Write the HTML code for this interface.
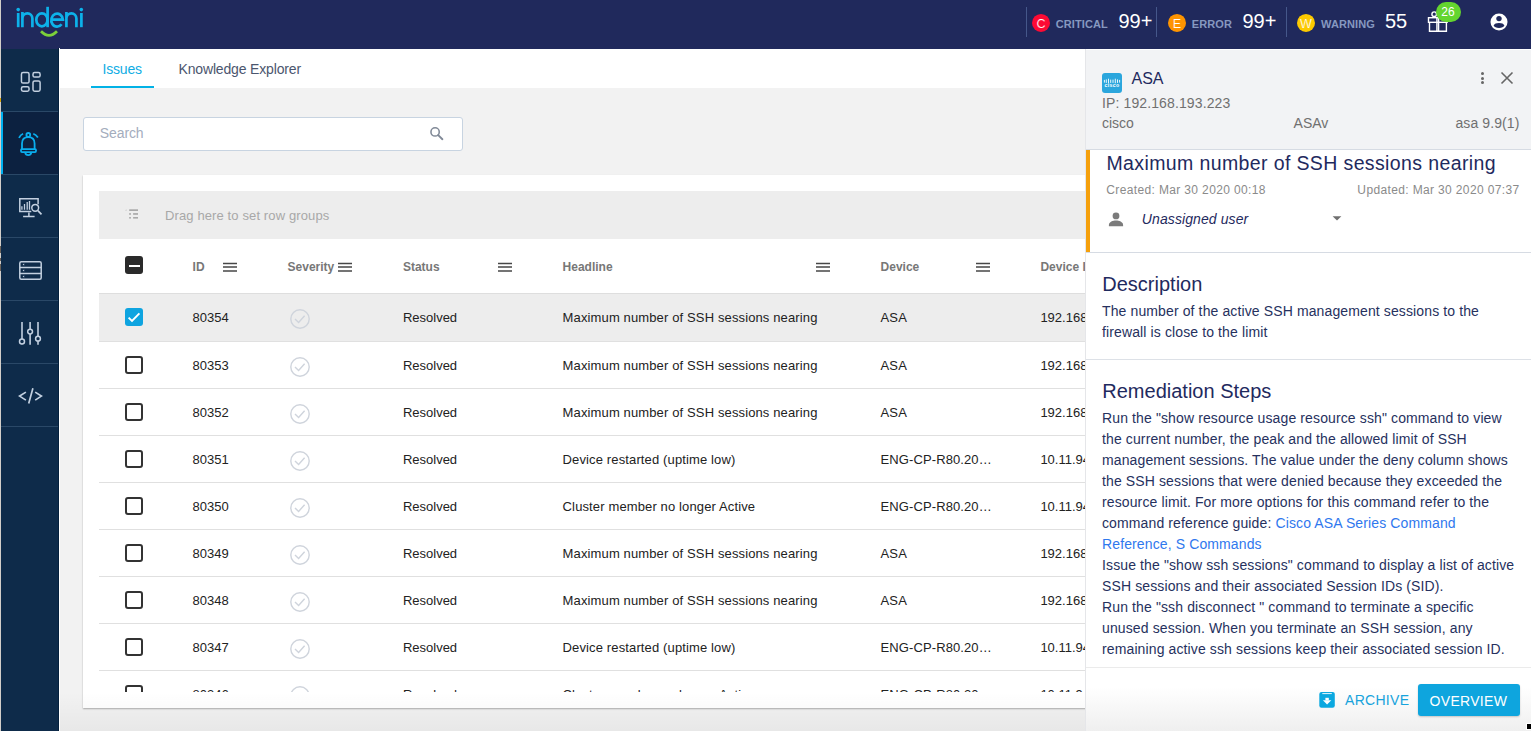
<!DOCTYPE html><html><head><meta charset="utf-8"><style>
*{box-sizing:border-box;margin:0;padding:0}
html,body{width:1531px;height:731px;overflow:hidden;background:#f2f2f2;font-family:"Liberation Sans",sans-serif}
body{position:relative}
.a{position:absolute}
.t{position:absolute;white-space:nowrap;line-height:1}
.hd{position:absolute;top:7px;width:1px;height:30px;background:#45578a}
.sev{position:absolute;width:18px;height:18px;border-radius:50%;color:#fff;font-size:12px;text-align:center;line-height:18px}
.slab{font-size:11px;font-weight:bold;color:#8191b5}
.cnt{font-size:20px;color:#fff}
.hl{font-size:12px;font-weight:bold;color:#777}
.menu{position:absolute;width:14px;height:10px;border-top:2px solid #454545;border-bottom:2px solid #454545}
.menu:after{content:"";position:absolute;left:0;top:2px;width:14px;height:2px;background:#454545}
.cb{position:absolute;left:125px;width:18px;height:18px;border:2px solid #333;border-radius:3px}
.ct{font-size:13px;color:#222;letter-spacing:.1px}
.nv{color:#1f2a5e}
</style></head><body>
<div class="a" style="left:59px;top:48px;width:1472px;height:40px;background:#fff"></div>
<div class="t" style="left:102.5px;top:62.35px;font-size:14px;color:#10ade4;letter-spacing:-.2px">Issues</div>
<div class="a" style="left:91px;top:86px;width:63px;height:2px;background:#02b2e6"></div>
<div class="t" style="left:178.5px;top:62.45px;font-size:14px;color:#4b566e;letter-spacing:-.16px">Knowledge Explorer</div>
<div class="a" style="left:83px;top:117px;width:380px;height:34px;background:#fff;border:1px solid #c8d4e1;border-radius:3px"></div>
<div class="t" style="left:99.8px;top:125.75px;font-size:14px;color:#a4adbd;letter-spacing:-.1px">Search</div>
<svg class="a" style="left:420px;top:120px" width="35" height="28" viewBox="420 120 35 28"><circle cx="435.1" cy="131.9" r="4.15" fill="none" stroke="#808997" stroke-width="1.55"/><path d="M438.2 135.1L442.4 139.2" stroke="#808997" stroke-width="1.9" stroke-linecap="round"/></svg>
<div class="a" style="left:83px;top:175px;width:1100px;height:533px;background:#fff;box-shadow:0 1px 1.5px rgba(0,0,0,.3)"></div>
<div class="a" style="left:99px;top:191px;width:1000px;height:48px;background:#ededed"></div>
<svg class="a" style="left:120px;top:205px" width="22" height="18" viewBox="120 205 22 18"><g fill="#a9a9a9"><path d="M125.3 210.2L126.4 209.6V210.8Z"/><rect x="129.2" y="209.3" width="8.8" height="1.7"/><rect x="129.2" y="213.1" width="1.7" height="1.7"/><rect x="133.1" y="213.1" width="4.9" height="1.7"/><rect x="129.2" y="217" width="1.7" height="1.6"/><rect x="133.1" y="217" width="4.9" height="1.6"/></g></svg>
<div class="t" style="left:165px;top:209.20px;font-size:13px;color:#a8a8a8;letter-spacing:.12px">Drag here to set row groups</div>
<div class="a" style="left:99px;top:293px;width:1000px;height:1px;background:#dedede"></div>
<div class="a" style="left:125px;top:256px;width:18px;height:18px;background:#2a2a2a;border-radius:3px"></div>
<div class="a" style="left:129px;top:264.5px;width:11px;height:2.5px;background:#fff"></div>
<div class="t" style="left:192.6px;top:260.84px;font-size:12px;color:#777;font-weight:bold">ID</div>
<div class="t" style="left:287.6px;top:260.84px;font-size:12px;color:#777;font-weight:bold">Severity</div>
<div class="t" style="left:402.9px;top:260.84px;font-size:12px;color:#777;font-weight:bold">Status</div>
<div class="t" style="left:562.6px;top:260.84px;font-size:12px;color:#777;font-weight:bold">Headline</div>
<div class="t" style="left:880.6px;top:260.84px;font-size:12px;color:#777;font-weight:bold">Device</div>
<div class="t" style="left:1040.4px;top:260.84px;font-size:12px;color:#777;font-weight:bold">Device IP</div>
<svg class="a" style="left:223px;top:261px" width="14" height="12" viewBox="0 0 14 12"><path d="M0 2.4H14M0 6.1H14M0 9.9H14" stroke="#474747" stroke-width="1.5"/></svg>
<svg class="a" style="left:338px;top:261px" width="14" height="12" viewBox="0 0 14 12"><path d="M0 2.4H14M0 6.1H14M0 9.9H14" stroke="#474747" stroke-width="1.5"/></svg>
<svg class="a" style="left:498px;top:261px" width="14" height="12" viewBox="0 0 14 12"><path d="M0 2.4H14M0 6.1H14M0 9.9H14" stroke="#474747" stroke-width="1.5"/></svg>
<svg class="a" style="left:816px;top:261px" width="14" height="12" viewBox="0 0 14 12"><path d="M0 2.4H14M0 6.1H14M0 9.9H14" stroke="#474747" stroke-width="1.5"/></svg>
<svg class="a" style="left:976px;top:261px" width="14" height="12" viewBox="0 0 14 12"><path d="M0 2.4H14M0 6.1H14M0 9.9H14" stroke="#474747" stroke-width="1.5"/></svg>
<div class="a" style="left:83px;top:294px;width:1002px;height:398px;overflow:hidden">
<div class="a" style="left:16px;top:0px;width:1000px;height:47px;background:#ededed"></div>
<div class="a" style="left:16px;top:47px;width:1000px;height:1px;background:#e0e0e0"></div>
<div class="a" style="left:42px;top:14px;width:18px;height:18px;background:#0ea4e0;border-radius:3px"></div>
<svg class="a" style="left:42px;top:14px" width="18" height="18" viewBox="0 0 18 18"><path d="M3.6 9.6 L7 12.9 L14.4 5.4" fill="none" stroke="#fff" stroke-width="1.9"/></svg>
<div class="t" style="left:109.6px;top:17.10px;font-size:13px;color:#222">80354</div>
<svg class="a" style="left:207px;top:15.0px" width="20" height="20" viewBox="0 0 20 20"><circle cx="10" cy="10" r="9.2" fill="none" stroke="#cfd4dc" stroke-width="1.4"/><path d="M5 10 L8.6 13.4 L14.6 6.8" fill="none" stroke="#cfd4dc" stroke-width="1.4"/></svg>
<div class="t" style="left:319.9px;top:17.10px;font-size:13px;color:#222">Resolved</div>
<div class="t" style="left:479.6px;top:17.10px;font-size:13px;color:#222;letter-spacing:.13px">Maximum number of SSH sessions nearing</div>
<div class="t" style="left:797.6px;top:17.10px;font-size:13px;color:#222;letter-spacing:.1px">ASA</div>
<div class="t" style="left:957.4000000000001px;top:17.10px;font-size:13px;color:#222">192.168.193.223</div>
<div class="a" style="left:16px;top:94px;width:1000px;height:1px;background:#e0e0e0"></div>
<div class="a" style="left:42px;top:62px;width:18px;height:18px;border:2px solid #333;border-radius:3px"></div>
<div class="t" style="left:109.6px;top:64.60px;font-size:13px;color:#222">80353</div>
<svg class="a" style="left:207px;top:62.5px" width="20" height="20" viewBox="0 0 20 20"><circle cx="10" cy="10" r="9.2" fill="none" stroke="#cfd4dc" stroke-width="1.4"/><path d="M5 10 L8.6 13.4 L14.6 6.8" fill="none" stroke="#cfd4dc" stroke-width="1.4"/></svg>
<div class="t" style="left:319.9px;top:64.60px;font-size:13px;color:#222">Resolved</div>
<div class="t" style="left:479.6px;top:64.60px;font-size:13px;color:#222;letter-spacing:.13px">Maximum number of SSH sessions nearing</div>
<div class="t" style="left:797.6px;top:64.60px;font-size:13px;color:#222;letter-spacing:.1px">ASA</div>
<div class="t" style="left:957.4000000000001px;top:64.60px;font-size:13px;color:#222">192.168.193.223</div>
<div class="a" style="left:16px;top:141px;width:1000px;height:1px;background:#e0e0e0"></div>
<div class="a" style="left:42px;top:109px;width:18px;height:18px;border:2px solid #333;border-radius:3px"></div>
<div class="t" style="left:109.6px;top:111.60px;font-size:13px;color:#222">80352</div>
<svg class="a" style="left:207px;top:109.5px" width="20" height="20" viewBox="0 0 20 20"><circle cx="10" cy="10" r="9.2" fill="none" stroke="#cfd4dc" stroke-width="1.4"/><path d="M5 10 L8.6 13.4 L14.6 6.8" fill="none" stroke="#cfd4dc" stroke-width="1.4"/></svg>
<div class="t" style="left:319.9px;top:111.60px;font-size:13px;color:#222">Resolved</div>
<div class="t" style="left:479.6px;top:111.60px;font-size:13px;color:#222;letter-spacing:.13px">Maximum number of SSH sessions nearing</div>
<div class="t" style="left:797.6px;top:111.60px;font-size:13px;color:#222;letter-spacing:.1px">ASA</div>
<div class="t" style="left:957.4000000000001px;top:111.60px;font-size:13px;color:#222">192.168.193.223</div>
<div class="a" style="left:16px;top:188px;width:1000px;height:1px;background:#e0e0e0"></div>
<div class="a" style="left:42px;top:156px;width:18px;height:18px;border:2px solid #333;border-radius:3px"></div>
<div class="t" style="left:109.6px;top:158.60px;font-size:13px;color:#222">80351</div>
<svg class="a" style="left:207px;top:156.5px" width="20" height="20" viewBox="0 0 20 20"><circle cx="10" cy="10" r="9.2" fill="none" stroke="#cfd4dc" stroke-width="1.4"/><path d="M5 10 L8.6 13.4 L14.6 6.8" fill="none" stroke="#cfd4dc" stroke-width="1.4"/></svg>
<div class="t" style="left:319.9px;top:158.60px;font-size:13px;color:#222">Resolved</div>
<div class="t" style="left:479.6px;top:158.60px;font-size:13px;color:#222;letter-spacing:.13px">Device restarted (uptime low)</div>
<div class="t" style="left:797.6px;top:158.60px;font-size:13px;color:#222;letter-spacing:.1px">ENG-CP-R80.20…</div>
<div class="t" style="left:957.4000000000001px;top:158.60px;font-size:13px;color:#222">10.11.94.10</div>
<div class="a" style="left:16px;top:235px;width:1000px;height:1px;background:#e0e0e0"></div>
<div class="a" style="left:42px;top:203px;width:18px;height:18px;border:2px solid #333;border-radius:3px"></div>
<div class="t" style="left:109.6px;top:205.60px;font-size:13px;color:#222">80350</div>
<svg class="a" style="left:207px;top:203.5px" width="20" height="20" viewBox="0 0 20 20"><circle cx="10" cy="10" r="9.2" fill="none" stroke="#cfd4dc" stroke-width="1.4"/><path d="M5 10 L8.6 13.4 L14.6 6.8" fill="none" stroke="#cfd4dc" stroke-width="1.4"/></svg>
<div class="t" style="left:319.9px;top:205.60px;font-size:13px;color:#222">Resolved</div>
<div class="t" style="left:479.6px;top:205.60px;font-size:13px;color:#222;letter-spacing:.13px">Cluster member no longer Active</div>
<div class="t" style="left:797.6px;top:205.60px;font-size:13px;color:#222;letter-spacing:.1px">ENG-CP-R80.20…</div>
<div class="t" style="left:957.4000000000001px;top:205.60px;font-size:13px;color:#222">10.11.94.10</div>
<div class="a" style="left:16px;top:282px;width:1000px;height:1px;background:#e0e0e0"></div>
<div class="a" style="left:42px;top:250px;width:18px;height:18px;border:2px solid #333;border-radius:3px"></div>
<div class="t" style="left:109.6px;top:252.60px;font-size:13px;color:#222">80349</div>
<svg class="a" style="left:207px;top:250.5px" width="20" height="20" viewBox="0 0 20 20"><circle cx="10" cy="10" r="9.2" fill="none" stroke="#cfd4dc" stroke-width="1.4"/><path d="M5 10 L8.6 13.4 L14.6 6.8" fill="none" stroke="#cfd4dc" stroke-width="1.4"/></svg>
<div class="t" style="left:319.9px;top:252.60px;font-size:13px;color:#222">Resolved</div>
<div class="t" style="left:479.6px;top:252.60px;font-size:13px;color:#222;letter-spacing:.13px">Maximum number of SSH sessions nearing</div>
<div class="t" style="left:797.6px;top:252.60px;font-size:13px;color:#222;letter-spacing:.1px">ASA</div>
<div class="t" style="left:957.4000000000001px;top:252.60px;font-size:13px;color:#222">192.168.193.223</div>
<div class="a" style="left:16px;top:329px;width:1000px;height:1px;background:#e0e0e0"></div>
<div class="a" style="left:42px;top:297px;width:18px;height:18px;border:2px solid #333;border-radius:3px"></div>
<div class="t" style="left:109.6px;top:299.60px;font-size:13px;color:#222">80348</div>
<svg class="a" style="left:207px;top:297.5px" width="20" height="20" viewBox="0 0 20 20"><circle cx="10" cy="10" r="9.2" fill="none" stroke="#cfd4dc" stroke-width="1.4"/><path d="M5 10 L8.6 13.4 L14.6 6.8" fill="none" stroke="#cfd4dc" stroke-width="1.4"/></svg>
<div class="t" style="left:319.9px;top:299.60px;font-size:13px;color:#222">Resolved</div>
<div class="t" style="left:479.6px;top:299.60px;font-size:13px;color:#222;letter-spacing:.13px">Maximum number of SSH sessions nearing</div>
<div class="t" style="left:797.6px;top:299.60px;font-size:13px;color:#222;letter-spacing:.1px">ASA</div>
<div class="t" style="left:957.4000000000001px;top:299.60px;font-size:13px;color:#222">192.168.193.223</div>
<div class="a" style="left:16px;top:376px;width:1000px;height:1px;background:#e0e0e0"></div>
<div class="a" style="left:42px;top:344px;width:18px;height:18px;border:2px solid #333;border-radius:3px"></div>
<div class="t" style="left:109.6px;top:346.60px;font-size:13px;color:#222">80347</div>
<svg class="a" style="left:207px;top:344.5px" width="20" height="20" viewBox="0 0 20 20"><circle cx="10" cy="10" r="9.2" fill="none" stroke="#cfd4dc" stroke-width="1.4"/><path d="M5 10 L8.6 13.4 L14.6 6.8" fill="none" stroke="#cfd4dc" stroke-width="1.4"/></svg>
<div class="t" style="left:319.9px;top:346.60px;font-size:13px;color:#222">Resolved</div>
<div class="t" style="left:479.6px;top:346.60px;font-size:13px;color:#222;letter-spacing:.13px">Device restarted (uptime low)</div>
<div class="t" style="left:797.6px;top:346.60px;font-size:13px;color:#222;letter-spacing:.1px">ENG-CP-R80.20…</div>
<div class="t" style="left:957.4000000000001px;top:346.60px;font-size:13px;color:#222">10.11.94.10</div>
<div class="a" style="left:16px;top:423px;width:1000px;height:1px;background:#e0e0e0"></div>
<div class="a" style="left:42px;top:391px;width:18px;height:18px;border:2px solid #333;border-radius:3px"></div>
<div class="t" style="left:109.6px;top:393.60px;font-size:13px;color:#222">80346</div>
<svg class="a" style="left:207px;top:391.5px" width="20" height="20" viewBox="0 0 20 20"><circle cx="10" cy="10" r="9.2" fill="none" stroke="#cfd4dc" stroke-width="1.4"/><path d="M5 10 L8.6 13.4 L14.6 6.8" fill="none" stroke="#cfd4dc" stroke-width="1.4"/></svg>
<div class="t" style="left:319.9px;top:393.60px;font-size:13px;color:#222">Resolved</div>
<div class="t" style="left:479.6px;top:393.60px;font-size:13px;color:#222;letter-spacing:.13px">Cluster member no longer Active</div>
<div class="t" style="left:797.6px;top:393.60px;font-size:13px;color:#222;letter-spacing:.1px">ENG-CP-R80.20…</div>
<div class="t" style="left:957.4000000000001px;top:393.60px;font-size:13px;color:#222">10.11.94.10</div>
</div>
<div class="a" style="left:59px;top:692px;width:1026px;height:39px;background:linear-gradient(rgba(0,0,0,0),rgba(0,0,0,.045))"></div>
<div class="a" style="left:1085px;top:48px;width:446px;height:683px;background:#fff;border-left:1px solid #e5e6e9"></div>
<div class="a" style="left:1086px;top:50px;width:445px;height:100px;background:#f2f3f5;border-bottom:1px solid #d6dbe3"></div>
<div class="a" style="left:1102px;top:73px;width:20px;height:20px;background:#2ba6dd;border-radius:3px"></div>
<svg class="a" style="left:1102px;top:73px" width="20" height="20" viewBox="0 0 20 20"><path d="M2.4 7.3V9.2M4.3 6.8V9.5M6.5 6.1V9.9M8.7 7V9.5M11 7V9.5M13.3 6.1V9.9M15.5 6.8V9.5M17.6 7.3V9.2" stroke="#fff" stroke-width="0.9" stroke-linecap="round"/><text x="10" y="13.9" font-size="5.2" fill="#fff" text-anchor="middle" font-family="Liberation Sans" font-weight="bold" letter-spacing="0.35">cisco</text></svg>
<div class="t" style="left:1131.5px;top:70.96px;font-size:16px;color:#1f2a5e">ASA</div>
<div class="a" style="left:1480.5px;top:72.0px;width:3px;height:3px;border-radius:50%;background:#666"></div>
<div class="a" style="left:1480.5px;top:76.5px;width:3px;height:3px;border-radius:50%;background:#666"></div>
<div class="a" style="left:1480.5px;top:81.0px;width:3px;height:3px;border-radius:50%;background:#666"></div>
<svg class="a" style="left:1499px;top:70px" width="16" height="16" viewBox="0 0 16 16"><path d="M2.5 2.5L13.5 13.5M13.5 2.5L2.5 13.5" stroke="#666" stroke-width="1.6"/></svg>
<div class="t" style="left:1102px;top:95.95px;font-size:14px;color:#707070;letter-spacing:.12px">IP: 192.168.193.223</div>
<div class="t" style="left:1102px;top:116.15px;font-size:14px;color:#707070">cisco</div>
<div class="t" style="left:1293.6px;top:116.15px;font-size:14px;color:#707070">ASAv</div>
<div class="t" style="right:11.5px;top:116.15px;font-size:14px;color:#707070;letter-spacing:.1px">asa 9.9(1)</div>
<div class="a" style="left:1086px;top:150px;width:4px;height:102px;background:#f5a00c"></div>
<div class="a" style="left:1086px;top:252px;width:445px;height:1px;background:#d6dbe3"></div>
<div class="t" style="left:1106.5px;top:153.69px;font-size:19.5px;color:#1f2a5e;letter-spacing:.38px">Maximum number of SSH sessions nearing</div>
<div class="t" style="left:1106.3px;top:184.04px;font-size:12px;color:#8a8a8a;letter-spacing:.36px">Created: Mar 30 2020 00:18</div>
<div class="t" style="right:11.5px;top:184.04px;font-size:12px;color:#8a8a8a;letter-spacing:.36px">Updated: Mar 30 2020 07:37</div>
<svg class="a" style="left:1107px;top:210px" width="18" height="18" viewBox="0 0 18 18"><circle cx="9" cy="5.9" r="3.4" fill="#7b7b7b"/><path d="M1.9 16.3V15C1.9 11.9 6 10.6 9 10.6C12 10.6 16.1 11.9 16.1 15V16.3Z" fill="#7b7b7b"/></svg>
<div class="t" style="left:1141.8px;top:212.15px;font-size:14px;color:#1f2a5e;font-style:italic;letter-spacing:.1px">Unassigned user</div>
<svg class="a" style="left:1331px;top:215px" width="12" height="7" viewBox="0 0 12 7"><path d="M1.6 1.2 L10.4 1.2 L6 5.6 Z" fill="#707070"/></svg>
<div class="t" style="left:1102.3px;top:274.07px;font-size:20px;color:#1f2a5e">Description</div>
<div class="a" style="left:1102px;top:301px;width:420px;font-size:14px;line-height:21px;color:#26315e;letter-spacing:.12px">The number of the active SSH management sessions to the<br>firewall is close to the limit</div>
<div class="a" style="left:1086px;top:359px;width:445px;height:1px;background:#dde1e7"></div>
<div class="t" style="left:1102.3px;top:381.07px;font-size:20px;color:#1f2a5e">Remediation Steps</div>
<div class="a" style="left:1102px;top:408px;width:429px;font-size:14px;line-height:21px;color:#26315e;letter-spacing:.12px;white-space:nowrap">Run the "show resource usage resource ssh" command to view<br>the current number, the peak and the allowed limit of SSH<br>management sessions. The value under the deny column shows<br>the SSH sessions that were denied because they exceeded the<br>resource limit. For more options for this command refer to the<br>command reference guide: <span style="color:#2f78ee">Cisco ASA Series Command</span><br><span style="color:#2f78ee">Reference, S Commands</span><br>Issue the "show ssh sessions" command to display a list of active<br>SSH sessions and their associated Session IDs (SID).<br>Run the "ssh disconnect " command to terminate a specific<br>unused session. When you terminate an SSH session, any<br>remaining active ssh sessions keep their associated session ID.</div>
<div class="a" style="left:1086px;top:667px;width:445px;height:1px;background:#ebebeb"></div>
<div class="a" style="left:1086px;top:668px;width:445px;height:63px;background:linear-gradient(#fff 30%,#efefef)"></div>
<svg class="a" style="left:1310px;top:685px" width="30" height="30" viewBox="1310 685 30 30"><rect x="1319.3" y="691.9" width="15.5" height="15.8" rx="2.2" fill="#0ba8e0"/><path d="M1322.3 693.6H1331.8" stroke="#fff" stroke-width="0.9"/><rect x="1325.4" y="697.8" width="3.4" height="2.6" fill="#fff"/><path d="M1322.9 700.2H1331.3L1327.1 704.4Z" fill="#fff"/></svg>
<div class="t" style="left:1345px;top:693.05px;font-size:14px;color:#17a3dc;letter-spacing:.3px">ARCHIVE</div>
<div class="a" style="left:1418px;top:684px;width:102px;height:32px;background:#0ea5de;border-radius:3px;box-shadow:0 1px 2px rgba(0,0,0,.2)"></div>
<div class="t" style="left:1429.6px;top:693.85px;font-size:14px;color:#fff;letter-spacing:.3px">OVERVIEW</div>
<div class="a" style="left:0;top:0;width:1531px;height:49px;background:#20295c"></div>
<svg class="a" style="left:0;top:0" width="100" height="48" viewBox="0 0 100 48">
<g fill="none" stroke="#0db2ea" stroke-width="2.7" stroke-linecap="butt">
<path d="M18.2 13V27.2"/>
<path d="M22.4 12V27.2M22.4 18.6A5 5.3 0 0 1 32.4 18.6V27.2"/>
<ellipse cx="41.9" cy="19.8" rx="5.6" ry="6.5"/>
<path d="M47.6 6.8V27.2"/>
<path d="M51.4 19.6H62.9A5.8 6.5 0 1 0 61.6 24.3"/>
<path d="M66.4 12V27.2M66.4 18.6A5 5.3 0 0 1 76.4 18.6V27.2"/>
<path d="M81.4 13V27.2"/>
</g>
<circle cx="18.2" cy="9.6" r="1.8" fill="#0db2ea"/>
<circle cx="81.3" cy="9.6" r="1.8" fill="#0db2ea"/>
<path d="M41 31.3Q49 39.5 57 31.3" fill="none" stroke="#7cd03a" stroke-width="2.7"/>
</svg>
<div class="hd" style="left:1026px"></div>
<div class="hd" style="left:1156px"></div>
<div class="hd" style="left:1286px"></div>
<svg class="a" style="left:1031px;top:13px" width="20" height="20" viewBox="1031 13 20 20"><circle cx="1041" cy="22.9" r="9" fill="#fc0a34"/><text x="1041" y="27.9" font-size="12.6" fill="#fff" stroke="#fc0a34" stroke-width="0.2" text-anchor="middle" font-family="Liberation Sans">C</text></svg>
<div class="t" style="left:1055.7px;top:18.69px;font-size:11px;color:#8698c0;font-weight:bold;letter-spacing:.1px">CRITICAL</div>
<div class="t" style="left:1118.5px;top:11.07px;font-size:20px;color:#fff">99+</div>
<svg class="a" style="left:1167px;top:13px" width="20" height="20" viewBox="1167 13 20 20"><circle cx="1177" cy="22.9" r="9" fill="#fe9400"/><text x="1177" y="27.9" font-size="12.6" fill="#fff" stroke="#fe9400" stroke-width="0.2" text-anchor="middle" font-family="Liberation Sans">E</text></svg>
<div class="t" style="left:1191.8px;top:18.69px;font-size:11px;color:#8698c0;font-weight:bold;letter-spacing:.1px">ERROR</div>
<div class="t" style="left:1242.4px;top:11.07px;font-size:20px;color:#fff">99+</div>
<svg class="a" style="left:1296px;top:13px" width="20" height="20" viewBox="1296 13 20 20"><circle cx="1306" cy="22.9" r="9" fill="#fdca00"/><text x="1306" y="27.9" font-size="12.6" fill="#fff" stroke="#fdca00" stroke-width="0.2" text-anchor="middle" font-family="Liberation Sans">W</text></svg>
<div class="t" style="left:1321px;top:18.69px;font-size:11px;color:#8698c0;font-weight:bold;letter-spacing:.1px">WARNING</div>
<div class="t" style="left:1385px;top:11.07px;font-size:20px;color:#fff">55</div>
<svg class="a" style="left:1420px;top:0" width="100" height="40" viewBox="1420 0 100 40"><g fill="none" stroke="#fff" stroke-width="1.4"><rect x="1428.5" y="17.7" width="18.6" height="4.6"/><path d="M1429.5 22.3V31.3H1446.4V22.3M1436.9 17.7V31.3M1438.6 17.7V31.3"/><circle cx="1434.2" cy="14.2" r="2.3"/></g>
<rect x="1436" y="2" width="25" height="20" rx="10" fill="#64d52f"/>
<text x="1448" y="16.1" font-size="12" fill="#fff" text-anchor="middle" font-family="Liberation Sans">26</text>
<circle cx="1499" cy="21.9" r="8.5" fill="#fff"/><circle cx="1499" cy="18.6" r="2.7" fill="#20295c"/><path d="M1493.6 25.6C1494.2 23.8 1496.4 23 1499 23C1501.6 23 1503.8 23.8 1504.4 25.6C1503.8 27.2 1501.6 28 1499 28C1496.4 28 1494.2 27.2 1493.6 25.6Z" fill="#20295c"/></svg>
<div class="a" style="left:0;top:0;width:1px;height:731px;background:#d2cec9"></div>
<div class="a" style="left:0;top:98px;width:1px;height:4px;background:#d9a200"></div>
<div class="a" style="left:0;top:246px;width:1px;height:7px;background:#6a625a"></div>
<div class="a" style="left:0;top:258px;width:1px;height:3px;background:#6a625a"></div>
<div class="a" style="left:0;top:264px;width:1px;height:7px;background:#6a625a"></div>
<div class="a" style="left:1px;top:49px;width:58px;height:682px;background:#0e2b4a"></div>
<div class="a" style="left:1px;top:112px;width:57px;height:62px;background:#0c2140"></div>
<div class="a" style="left:1px;top:112px;width:2px;height:62px;background:#00b0f0"></div>
<div class="a" style="left:58px;top:48px;width:1px;height:683px;background:#04203d"></div>
<div class="a" style="left:59px;top:48px;width:1px;height:683px;background:#fff"></div>
<div class="a" style="left:1px;top:111px;width:57px;height:1px;background:#2a4867"></div>
<div class="a" style="left:1px;top:174px;width:57px;height:1px;background:#2a4867"></div>
<div class="a" style="left:1px;top:237px;width:57px;height:1px;background:#2a4867"></div>
<div class="a" style="left:1px;top:300px;width:57px;height:1px;background:#2a4867"></div>
<div class="a" style="left:1px;top:363px;width:57px;height:1px;background:#2a4867"></div>
<div class="a" style="left:1px;top:426px;width:57px;height:1px;background:#2a4867"></div>
<svg class="a" style="left:0;top:0" width="59" height="731" viewBox="0 0 59 731">
<g fill="none" stroke="#c3d0e0" stroke-width="1.5">
<rect x="21.45" y="72.6" width="7.6" height="10.4" rx="1.6"/>
<rect x="33" y="72.6" width="7.1" height="4.4" rx="1.6"/>
<rect x="21.45" y="86.8" width="7.6" height="4.4" rx="1.6"/>
<rect x="33" y="80.9" width="7.1" height="10.3" rx="1.6"/>
<path d="M31.3 211.6H19.8V198.7H38.1V204.3"/>
<path d="M28.9 212.4V215.8M23.1 216.4H34.6" />
<path d="M21.9 209.8V206.2M24.5 209.8V204M27.2 209.8V202M29.5 209.8V201" stroke-width="1.3"/>
<circle cx="35.2" cy="207.8" r="3.4"/>
<path d="M37.9 210.6L41.5 214.3" stroke-width="1.7"/>
<rect x="19.8" y="261.7" width="21.4" height="17.5" rx="1.5"/>
<path d="M19.8 267.5H41.2M19.8 273.5H41.2"/>
<path d="M22 338.9V322M22 344.2V344.4M30.1 322V329.2M30.1 334V344.7M38 322V336.3M38 341.1V344.7" stroke-width="1.6"/>
<circle cx="22" cy="341.6" r="2.5"/>
<circle cx="30.1" cy="331.6" r="2.4"/>
<circle cx="38" cy="338.7" r="2.4"/>
<path d="M25.9 392.1L19.6 396.1L25.9 400.1M35.2 392.1L41.4 396.1L35.2 400.1M32.9 388.3L28.7 403.4" stroke-width="1.7"/>
</g>
<g fill="#c3d0e0"><path d="M22.6 264.5L24.2 263.5V265.5Z"/><path d="M22.6 270.5L24.2 269.5V271.5Z"/><path d="M22.6 276.4L24.2 275.4V277.4Z"/></g>
<g fill="none" stroke="#0aaeee" stroke-width="1.8">
<circle cx="28.3" cy="134.9" r="1.9"/>
<path d="M19 137.9Q20.5 134.7 23.1 133.75M33.3 133.75Q35.9 134.7 37.9 137.6"/>
<path d="M22 148.9V143.5C22 139.4 24.6 137.1 28.3 137.1C32 137.1 34.6 139.4 34.6 143.5V148.9"/>
<rect x="21" y="149.1" width="15" height="3" rx="1"/>
<path d="M25.2 152.6A3.1 3 0 0 0 31.3 152.6"/>
</g>
</svg>
<div class="a" style="left:1526px;top:723px;width:5px;height:7px;background:#fff"></div><div class="a" style="left:1527px;top:724px;width:4px;height:5px;background:#000"></div>
</body></html>
